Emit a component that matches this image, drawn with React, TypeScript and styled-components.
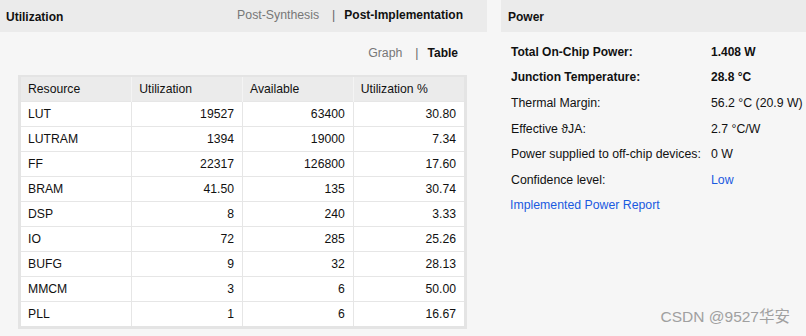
import React from 'react';
import styled, { createGlobalStyle } from 'styled-components';

const GlobalStyle = createGlobalStyle`
  html, body {
    margin: 0;
    padding: 0;
    background: #f6f6f6;
    font-family: "Liberation Sans", Arial, sans-serif;
    font-size: 12.3px;
    color: #111;
  }
`;

const Page = styled.div`
  display: flex;
  gap: 14px;
  height: 336px;
  position: relative;
  overflow: hidden;
`;

const Panel = styled.section<{ $width?: number }>`
  display: flex;
  flex-direction: column;
  ${(p) => (p.$width ? `width: ${p.$width}px; flex: none;` : 'flex: 1;')}
`;

const PanelHeader = styled.div<{ $padLeft: number }>`
  height: 32px;
  background: #ebebeb;
  display: flex;
  align-items: center;
  justify-content: space-between;
  padding: 0 24px 0 ${(p) => p.$padLeft}px;
  flex: none;
`;

const PanelTitle = styled.div`
  font-weight: bold;
  font-size: 12px;
  margin-top: 1px;
`;

const Switch = styled.div`
  display: flex;
  align-items: center;
  margin-top: -3px;
`;

const SwitchItem = styled.span<{ $active?: boolean }>`
  color: ${(p) => (p.$active ? '#111' : '#777')};
  font-weight: ${(p) => (p.$active ? 'bold' : 'normal')};
  font-size: ${(p) => (p.$active ? '12px' : '12.3px')};
`;

const Divider = styled.span`
  color: #666;
  margin: 0 9px 0 13px;
`;

const SubBar = styled.div`
  display: flex;
  justify-content: flex-end;
  padding: 12px 29px 0 0;
  height: 20px;
`;

const TableFrame = styled.div`
  margin: 11px 0 0 18px;
  width: 449px;
  box-sizing: border-box;
  border: 3px solid #e4e4e4;
  border-top-width: 2px;
  background: #fff;
`;

const Table = styled.table`
  width: 100%;
  border-collapse: collapse;
  table-layout: fixed;
  font-size: 12.2px;
`;

const HeadCell = styled.th`
  background: #ebebeb;
  text-align: left;
  font-weight: normal;
  height: 24px;
  padding: 0 7px;
  border-left: 1px solid #f4f4f4;
  &:first-child {
    border-left: none;
  }
`;

const Cell = styled.td<{ $num?: boolean }>`
  height: 24px;
  padding: 0 ${(p) => (p.$num ? '8px' : '7px')};
  text-align: ${(p) => (p.$num ? 'right' : 'left')};
  border-left: 1px solid #e6e6e6;
  border-top: 1px solid #e6e6e6;
  &:first-child {
    border-left: none;
  }
`;

const PowerBody = styled.div`
  padding: 7px 0 0 10px;
`;

const PowerGrid = styled.div`
  display: grid;
  grid-template-columns: 200px auto;
  grid-auto-rows: 25.6px;
  align-items: center;
`;

const PowerText = styled.div<{ $bold?: boolean; $link?: boolean }>`
  font-weight: ${(p) => (p.$bold ? 'bold' : 'normal')};
  font-size: ${(p) => (p.$bold ? '12px' : '12.3px')};
  color: ${(p) => (p.$link ? '#1a5ae0' : '#111')};
  white-space: nowrap;
`;

const ReportLink = styled.div`
  color: #1a5ae0;
  margin-left: -1px;
  height: 25.6px;
  line-height: 25.6px;
`;

const Watermark = styled.div`
  position: absolute;
  right: 16px;
  bottom: 10px;
  font-size: 15.5px;
  color: #a0a0a0;
  font-family: "Liberation Sans", "Noto Sans CJK SC", sans-serif;
`;

const rows: [string, string, string, string][] = [
  ['LUT', '19527', '63400', '30.80'],
  ['LUTRAM', '1394', '19000', '7.34'],
  ['FF', '22317', '126800', '17.60'],
  ['BRAM', '41.50', '135', '30.74'],
  ['DSP', '8', '240', '3.33'],
  ['IO', '72', '285', '25.26'],
  ['BUFG', '9', '32', '28.13'],
  ['MMCM', '3', '6', '50.00'],
  ['PLL', '1', '6', '16.67'],
];

const power: { label: string; value: string; bold?: boolean; link?: boolean }[] = [
  { label: 'Total On-Chip Power:', value: '1.408 W', bold: true },
  { label: 'Junction Temperature:', value: '28.8 °C', bold: true },
  { label: 'Thermal Margin:', value: '56.2 °C (20.9 W)' },
  { label: 'Effective ϑJA:', value: '2.7 °C/W' },
  { label: 'Power supplied to off-chip devices:', value: '0 W' },
  { label: 'Confidence level:', value: 'Low', link: true },
];

export default function App() {
  return (
    <>
      <GlobalStyle />
      <Page>
        <Panel $width={487}>
          <PanelHeader $padLeft={6}>
            <PanelTitle>Utilization</PanelTitle>
            <Switch>
              <SwitchItem>Post-Synthesis</SwitchItem>
              <Divider>|</Divider>
              <SwitchItem $active>Post-Implementation</SwitchItem>
            </Switch>
          </PanelHeader>
          <SubBar>
            <Switch>
              <SwitchItem>Graph</SwitchItem>
              <Divider>|</Divider>
              <SwitchItem $active>Table</SwitchItem>
            </Switch>
          </SubBar>
          <TableFrame>
            <Table>
              <thead>
                <tr>
                  <HeadCell>Resource</HeadCell>
                  <HeadCell>Utilization</HeadCell>
                  <HeadCell>Available</HeadCell>
                  <HeadCell>Utilization %</HeadCell>
                </tr>
              </thead>
              <tbody>
                {rows.map((r) => (
                  <tr key={r[0]}>
                    <Cell>{r[0]}</Cell>
                    <Cell $num>{r[1]}</Cell>
                    <Cell $num>{r[2]}</Cell>
                    <Cell $num>{r[3]}</Cell>
                  </tr>
                ))}
              </tbody>
            </Table>
          </TableFrame>
        </Panel>
        <Panel>
          <PanelHeader $padLeft={7}>
            <PanelTitle>Power</PanelTitle>
          </PanelHeader>
          <PowerBody>
            <PowerGrid>
              {power.map((p) => (
                <React.Fragment key={p.label}>
                  <PowerText $bold={p.bold}>{p.label}</PowerText>
                  <PowerText $bold={p.bold} $link={p.link}>
                    {p.value}
                  </PowerText>
                </React.Fragment>
              ))}
            </PowerGrid>
            <ReportLink>Implemented Power Report</ReportLink>
          </PowerBody>
        </Panel>
        <Watermark>CSDN @9527华安</Watermark>
      </Page>
    </>
  );
}
